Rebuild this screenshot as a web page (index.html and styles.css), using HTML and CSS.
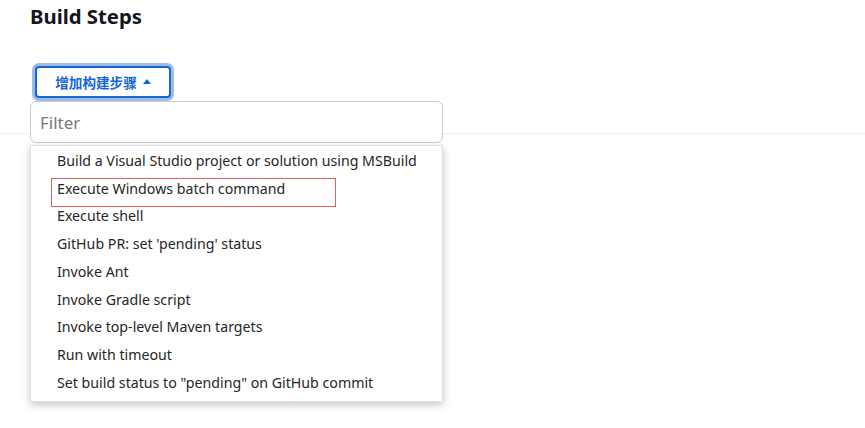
FILE: index.html
```html
<!DOCTYPE html>
<html>
<head>
<meta charset="utf-8">
<link rel="stylesheet" href="styles.css">
</head>
<body>
<div class="page">
  <h2 class="title">Build Steps</h2>
  <div class="add-wrap">
    <button class="add-btn">增加构建步骤 <span class="caret"></span></button>
    <div class="menu">
      <input class="filter" type="text" placeholder="Filter">
      <ul class="list">
        <li>Build a Visual Studio project or solution using MSBuild</li>
        <li class="marked">Execute Windows batch command<span class="mark"></span></li>
        <li>Execute shell</li>
        <li>GitHub PR: set 'pending' status</li>
        <li>Invoke Ant</li>
        <li>Invoke Gradle script</li>
        <li>Invoke top-level Maven targets</li>
        <li>Run with timeout</li>
        <li>Set build status to "pending" on GitHub commit</li>
      </ul>
    </div>
  </div>
  <div class="section"></div>
</div>
</body>
</html>
```
FILE: styles.css
```css
html, body {
  margin: 0;
  padding: 0;
  background: #fff;
}
body {
  font-family: "Noto Sans", "Open Sans", "Noto Sans CJK SC", sans-serif;
  color: #1f1f1f;
}
.page {
  padding-left: 30px;
  padding-top: 2px;
  min-height: 428px;
  box-sizing: border-box;
}
.title {
  margin: 0;
  font-size: 20.3px;
  line-height: 28px;
  font-weight: 700;
  color: #14141f;
}
.add-wrap {
  position: relative;
  z-index: 2;
  margin-top: 36px;
  padding-left: 5px;
  height: 32px;
}
.add-btn {
  box-sizing: border-box;
  width: 136px;
  height: 32px;
  border: 2px solid #1466d8;
  border-radius: 4px;
  background: #fff;
  color: #1466d8;
  font-family: "Noto Sans CJK SC", sans-serif;
  font-size: 13.6px;
  font-weight: 700;
  box-shadow: 0 0 0 3px #9dbde4;
  padding: 0;
  display: flex;
  align-items: center;
  justify-content: center;
  gap: 6px;
}
.caret {
  width: 0;
  height: 0;
  border-left: 4px solid transparent;
  border-right: 4px solid transparent;
  border-bottom: 5px solid #1466d8;
  margin-top: -1px;
}
.menu {
  position: absolute;
  left: 0;
  top: 35px;
  width: 413px;
}
.filter {
  display: block;
  box-sizing: border-box;
  width: 413px;
  height: 42px;
  border: 1px solid #c5cbd1;
  border-radius: 6px;
  padding: 0 9px;
  font-family: "Noto Sans", sans-serif;
  font-size: 17px;
  color: #333;
  outline: none;
  background: #fff;
}
.filter::placeholder {
  color: #7a7a7a;
}
.list {
  list-style: none;
  margin: 2px 0 0;
  padding: 1px 0 5px;
  border: 1px solid #dde1e5;
  background: #fff;
  box-shadow: 0 3px 8px rgba(0, 0, 0, 0.22);
}
.list li {
  position: relative;
  padding-left: 26px;
  font-size: 14.2px;
  line-height: 27.7px;
  color: #262626;
  white-space: nowrap;
}
.mark {
  position: absolute;
  left: 20px;
  top: 3px;
  width: 285px;
  height: 29px;
  box-sizing: border-box;
  border: 1px solid #ea5b5b;
}
.section {
  margin-top: 35px;
  margin-left: -30px;
  border-top: 1px solid #eceef0;
}
```
